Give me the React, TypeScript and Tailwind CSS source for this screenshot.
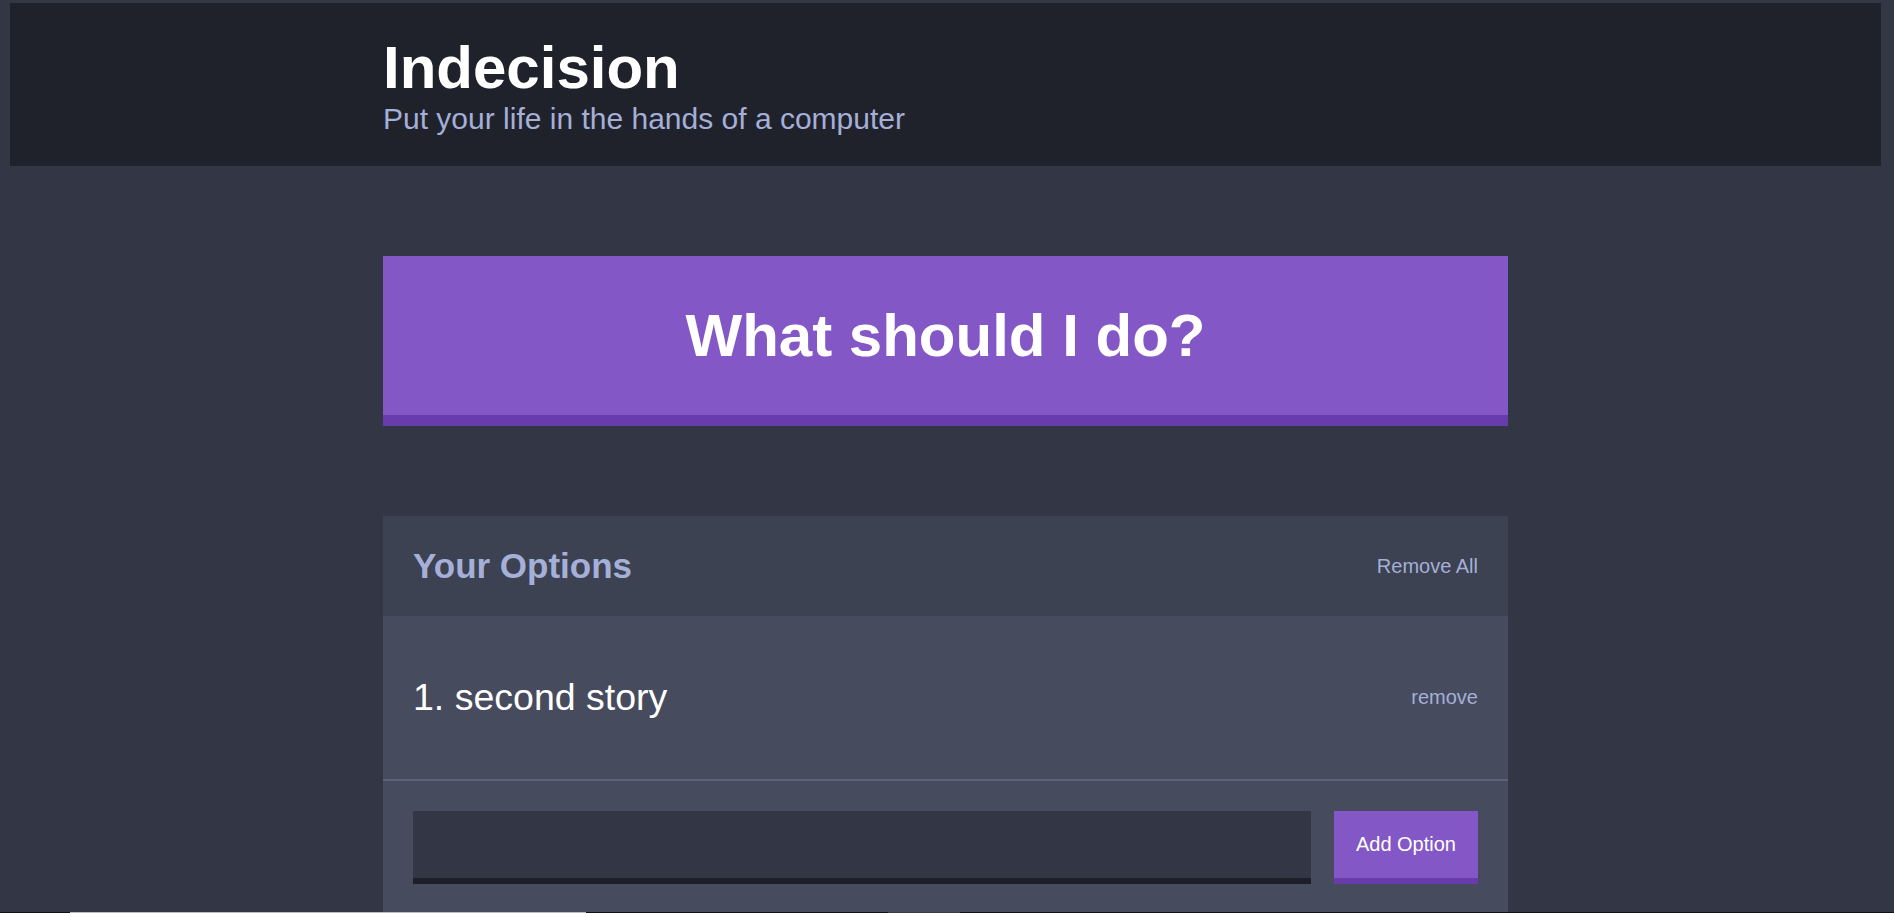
import React from "react";

export default function App() {
  return (
    <div className="min-h-screen bg-[#333745] pt-[3px] pl-[10px] pr-[13px] font-['Liberation_Sans',Arial,sans-serif] text-[30px]">
      <header className="bg-[#20222b] pt-[30px] pb-[30px] mb-[90px]">
        <div className="max-w-[1125px] mx-auto">
          <h1 className="m-0 text-[60px] font-bold leading-[69px] text-white">Indecision</h1>
          <h2 className="m-0 text-[30px] font-normal leading-[34px] text-[#a5afd7]">
            Put your life in the hands of a computer
          </h2>
        </div>
      </header>
      <div className="max-w-[1125px] mx-auto">
        <button className="block w-full bg-[#8357c5] border-b-[11px] border-[#693cad] p-[45px] mb-[90px] text-[60px] font-bold leading-[69px] text-white">
          What should I do?
        </button>
        <div className="bg-[#464b5e]">
          <div className="flex items-center justify-between bg-[#3c4251] p-[30px]">
            <h3 className="m-0 text-[35px] font-bold leading-[40px] text-[#a5afd7]">Your Options</h3>
            <button className="text-[20px] leading-[23px] text-[#a5afd7]">Remove All</button>
          </div>
          <div className="flex items-center justify-between border-b-2 border-[#5c627b] px-[30px] py-[60px]">
            <p className="m-0 text-[37.5px] leading-[43px] text-white">1. second story</p>
            <button className="text-[20px] leading-[23px] text-[#a5afd7]">remove</button>
          </div>
          <form className="flex gap-[23px] p-[30px]" onSubmit={(e) => e.preventDefault()}>
            <input
              type="text"
              className="flex-1 bg-[#333745] border-b-[6px] border-[#1d1f28] p-[22.5px] text-[20px] leading-[22px] text-[#a5afd7] outline-none"
            />
            <button className="bg-[#8357c5] border-b-[6px] border-[#693cad] px-[22px] text-[20px] leading-[23px] text-white">
              Add Option
            </button>
          </form>
        </div>
      </div>
      <div className="fixed bottom-0 left-0 right-0 h-px bg-[#111111]">
        <div className="absolute top-0 left-[70px] h-px w-[516px] bg-[#bdbdbd]" />
        <div className="absolute top-0 left-[888px] h-px w-[72px] bg-[#3c3c3c]" />
      </div>
    </div>
  );
}
